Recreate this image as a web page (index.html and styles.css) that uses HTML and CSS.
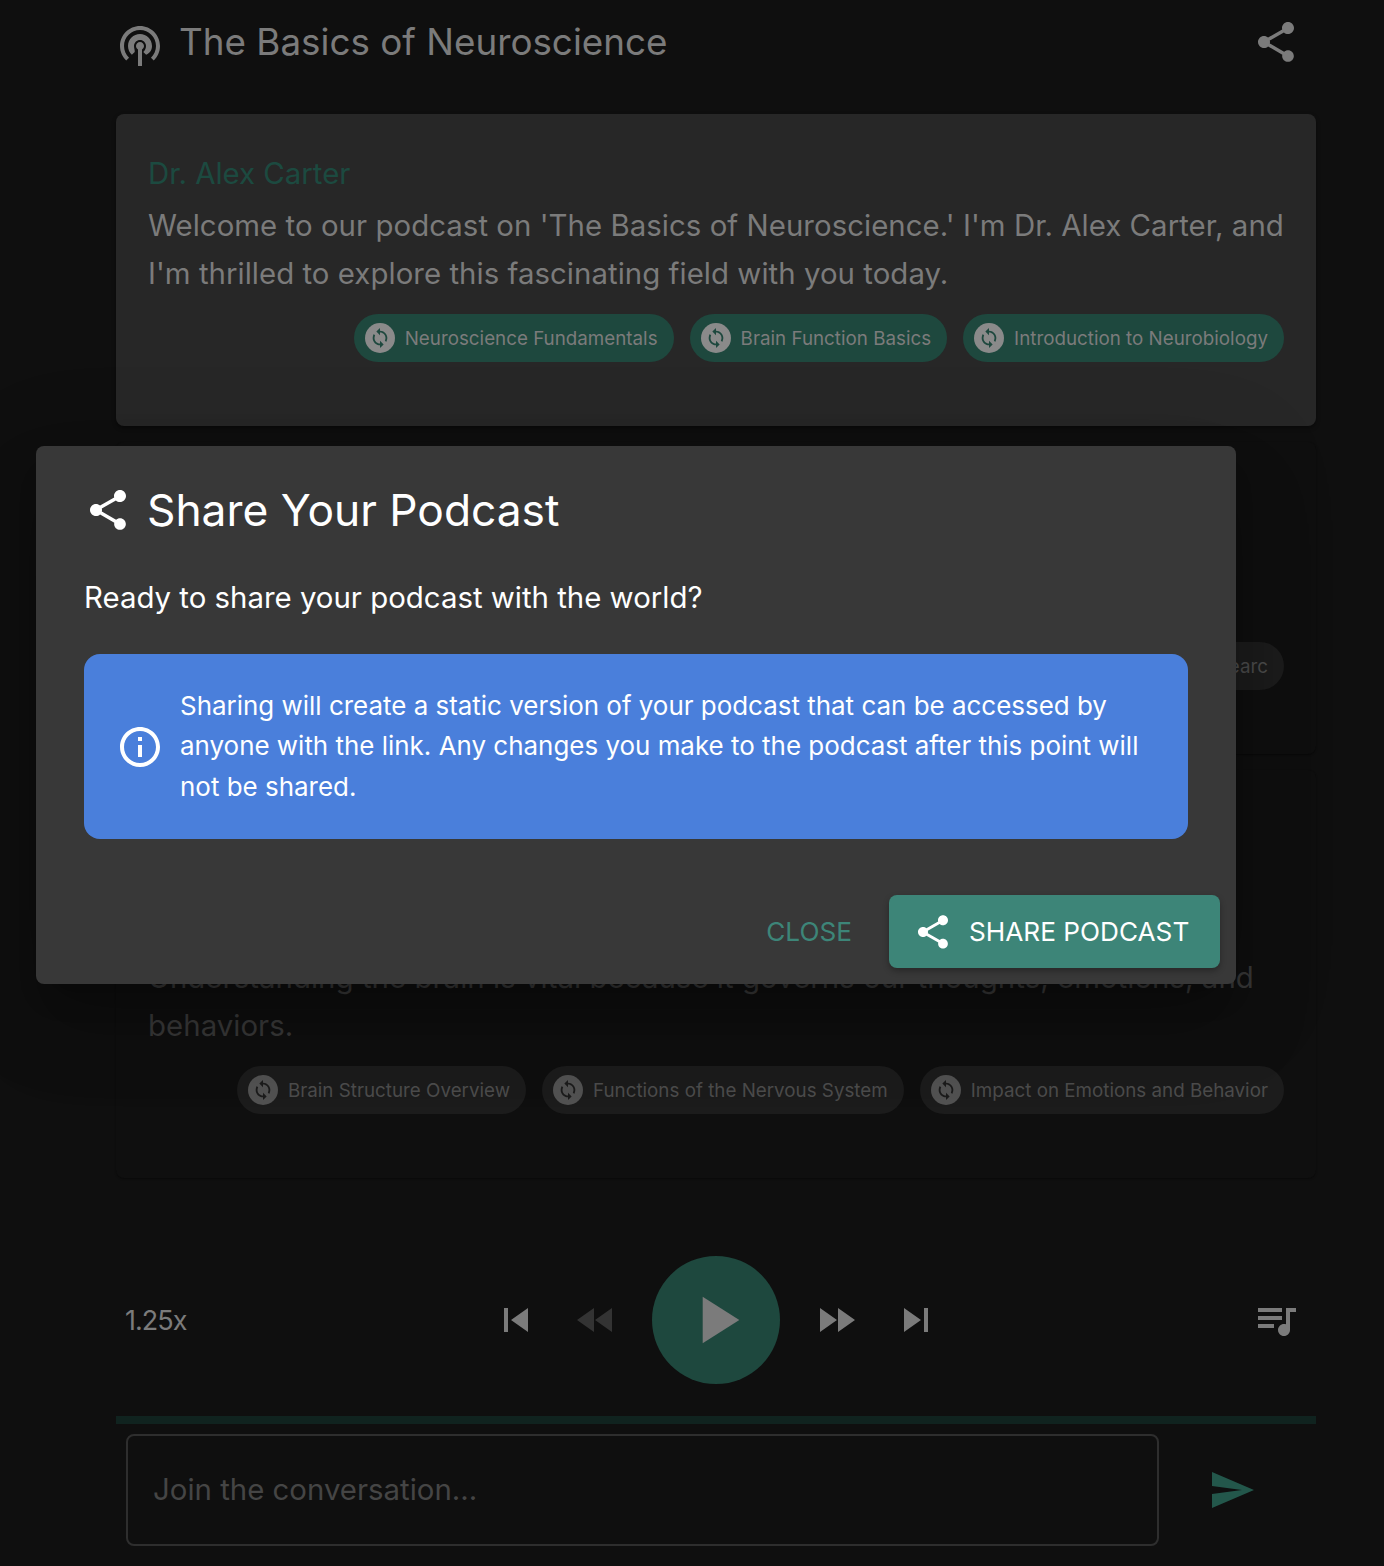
FILE: index.html
```html
<!DOCTYPE html>
<html lang="en">
<head>
    <meta charset="UTF-8">
    <meta name="viewport" content="width=device-width, initial-scale=1.0">
    <title>The Basics of Neuroscience</title>
    <link rel="stylesheet" href="styles.css">
</head>
<body>
    <svg class="sprites" aria-hidden="true">
        <symbol id="i-share" viewBox="0 0 24 24"><path d="M18 16.08c-.76 0-1.44.3-1.96.77L8.91 12.7c.05-.23.09-.46.09-.7s-.04-.47-.09-.7l7.05-4.11c.54.5 1.25.81 2.04.81 1.66 0 3-1.34 3-3s-1.34-3-3-3-3 1.34-3 3c0 .24.04.47.09.7L8.04 9.81C7.5 9.31 6.79 9 6 9c-1.66 0-3 1.34-3 3s1.34 3 3 3c.79 0 1.5-.31 2.04-.81l7.12 4.16c-.05.21-.08.43-.08.65 0 1.61 1.31 2.92 2.92 2.92 1.61 0 2.92-1.31 2.92-2.92s-1.31-2.92-2.92-2.92z"/></symbol>
        <symbol id="i-sync" viewBox="0 0 24 24"><path d="M12 4V1L8 5l4 4V6c3.31 0 6 2.69 6 6 0 1.01-.25 1.97-.7 2.8l1.46 1.46C19.54 15.03 20 13.57 20 12c0-4.42-3.58-8-8-8zm0 14c-3.31 0-6-2.69-6-6 0-1.01.25-1.97.7-2.8L5.24 7.74C4.46 8.97 4 10.43 4 12c0 4.42 3.58 8 8 8v3l4-4-4-4v3z"/></symbol>
    </svg>

    <div class="app">
        <header class="topbar">
            <div class="topbar-title">
                <svg class="icon podcast" viewBox="0 0 24 24"><path d="M14 12c0 .74-.4 1.38-1 1.72V22h-2v-8.28c-.6-.35-1-.98-1-1.72 0-1.1.9-2 2-2s2 .9 2 2zm-2-6c-3.31 0-6 2.69-6 6 0 1.74.75 3.31 1.94 4.4l1.42-1.42C9.53 14.25 9 13.19 9 12c0-1.65 1.35-3 3-3s3 1.35 3 3c0 1.19-.53 2.25-1.36 2.98l1.42 1.42C17.25 15.31 18 13.74 18 12c0-3.31-2.69-6-6-6zm0-4C6.48 2 2 6.48 2 12c0 2.85 1.2 5.41 3.11 7.24l1.42-1.42C4.98 16.36 4 14.29 4 12c0-4.41 3.59-8 8-8s8 3.59 8 8c0 2.29-.98 4.36-2.53 5.82l1.42 1.42C20.8 17.41 22 14.85 22 12c0-5.52-4.48-10-10-10z"/></svg>
                <h1>The Basics of Neuroscience</h1>
            </div>
            <svg class="icon"><use href="#i-share"/></svg>
        </header>

        <section class="card card-active">
            <h2 class="speaker">Dr. Alex Carter</h2>
            <p class="line">Welcome to our podcast on 'The Basics of Neuroscience.' I'm Dr. Alex Carter, and I'm thrilled to explore this fascinating field with you today.</p>
            <div class="chips">
                <span class="chip"><span class="chip-icon"><svg><use href="#i-sync"/></svg></span>Neuroscience Fundamentals</span>
                <span class="chip"><span class="chip-icon"><svg><use href="#i-sync"/></svg></span>Brain Function Basics</span>
                <span class="chip"><span class="chip-icon"><svg><use href="#i-sync"/></svg></span>Introduction to Neurobiology</span>
            </div>
        </section>

        <section class="card card-dim">
            <h2 class="speaker">Dr. Alex Carter</h2>
            <p class="line">Neuroscience is the study of the nervous system, and it draws on biology, chemistry and psychology to explain how we work.</p>
            <div class="chips">
                <span class="chip"><span class="chip-icon"><svg><use href="#i-sync"/></svg></span>Neuroscience Researc</span>
            </div>
        </section>

        <section class="card card-dim">
            <h2 class="speaker">Dr. Alex Carter</h2>
            <p class="line">That's right, and it is a wide field with plenty to cover, from single neurons to whole networks in the brain and the body as well.<br>Understanding the brain is vital because it governs our thoughts, emotions, and behaviors.</p>
            <div class="chips">
                <span class="chip"><span class="chip-icon"><svg><use href="#i-sync"/></svg></span>Brain Structure Overview</span>
                <span class="chip"><span class="chip-icon"><svg><use href="#i-sync"/></svg></span>Functions of the Nervous System</span>
                <span class="chip"><span class="chip-icon"><svg><use href="#i-sync"/></svg></span>Impact on Emotions and Behavior</span>
            </div>
        </section>

        <div class="player">
            <span class="speed">1.25x</span>
            <div class="controls">
                <svg class="icon" viewBox="0 0 24 24"><path d="M6 6h2v12H6zm3.5 6 8.5 6V6z"/></svg>
                <svg class="icon icon-off" viewBox="0 0 24 24"><path d="M11 18V6l-8.5 6 8.5 6zm.5-6 8.5 6V6l-8.5 6z"/></svg>
                <span class="play"><svg viewBox="0 0 24 24"><path d="M8 5v14l11-7z"/></svg></span>
                <svg class="icon" viewBox="0 0 24 24"><path d="M4 18l8.5-6L4 6v12zm9-12v12l8.5-6L13 6z"/></svg>
                <svg class="icon" viewBox="0 0 24 24"><path d="M6 18l8.5-6L6 6v12zM16 6v12h2V6h-2z"/></svg>
            </div>
            <svg class="icon queue" viewBox="0 0 24 24"><path d="M15 6H3v2h12V6zm0 4H3v2h12v-2zM3 16h8v-2H3v2zM17 6v8.18c-.31-.11-.65-.18-1-.18-1.66 0-3 1.34-3 3s1.34 3 3 3 3-1.34 3-3V8h3V6h-5z"/></svg>
        </div>

        <div class="progress"></div>

        <form class="composer">
            <input class="composer-input" type="text" placeholder="Join the conversation...">
            <svg class="icon send" viewBox="0 0 24 24"><path d="M2.01 21 23 12 2.01 3 2 10l15 2-15 2z"/></svg>
        </form>
    </div>

    <div class="dialog">
        <div class="dialog-title">
            <svg class="icon"><use href="#i-share"/></svg>
            <h2>Share Your Podcast</h2>
        </div>
        <p class="dialog-text">Ready to share your podcast with the world?</p>
        <div class="notice">
            <svg class="icon" viewBox="0 0 24 24"><path d="M11 7h2v2h-2zm0 4h2v6h-2zm1-9C6.48 2 2 6.48 2 12s4.48 10 10 10 10-4.48 10-10S17.52 2 12 2zm0 18c-4.41 0-8-3.59-8-8s3.59-8 8-8 8 3.59 8 8-3.59 8-8 8z"/></svg>
            <p>Sharing will create a static version of your podcast that can be accessed by anyone with the link. Any changes you make to the podcast after this point will not be shared.</p>
        </div>
        <div class="dialog-actions">
            <button class="btn-close" type="button">Close</button>
            <button class="btn-share" type="button"><svg><use href="#i-share"/></svg>Share Podcast</button>
        </div>
    </div>
</body>
</html>
```

FILE: styles.css
```css
* {
    box-sizing: border-box;
}
html, body {
    height: 100%;
}
body {
    font-family: Inter, "Liberation Sans", sans-serif;
    margin: 0;
    overflow: hidden;
    background-color: #0f0f0f;
    color: #7b7b7b;
}
h1, h2, p {
    margin: 0;
    font-weight: 400;
}
svg {
    fill: currentColor;
    display: block;
}
.sprites {
    display: none;
}
.icon {
    width: 48px;
    height: 48px;
    flex-shrink: 0;
}
.app {
    width: 1200px;
    margin-left: 116px;
}

/* top bar */
.topbar {
    height: 84px;
    margin-bottom: 30px;
    display: flex;
    align-items: center;
    justify-content: space-between;
    padding-right: 16px;
}
.topbar-title {
    display: flex;
    align-items: center;
    gap: 15px;
}
.topbar h1 {
    font-size: 36.8px;
    line-height: 48px;
}
.podcast {
    margin-top: 8px;
}

/* transcript cards */
.card {
    padding: 32px 32px 64px;
    margin-bottom: 16px;
    border-radius: 8px;
}
.speaker {
    font-size: 29.4px;
    line-height: 55px;
}
.line {
    margin-top: 1px;
    font-size: 29.4px;
    line-height: 48px;
    letter-spacing: 0.04px;
}
.chips {
    display: flex;
    justify-content: flex-end;
    gap: 16px;
    margin-top: 16px;
}
.chip {
    display: flex;
    align-items: center;
    gap: 10px;
    height: 48px;
    padding: 0 16px 0 11px;
    border-radius: 24px;
    font-size: 18.8px;
    white-space: nowrap;
}
.chip-icon {
    width: 30px;
    height: 30px;
    border-radius: 50%;
    display: flex;
    align-items: center;
    justify-content: center;
}
.chip-icon svg {
    width: 22px;
    height: 22px;
}
.card-active {
    background-color: #272727;
    box-shadow: 0 2px 4px rgba(0, 0, 0, 0.4);
}
.card-active .speaker {
    color: #1c4a40;
}
.card-active .chip {
    background-color: #1e483e;
    color: #7b7b7b;
}
.card-active .chip-icon {
    background-color: #8a8a8a;
    color: #1e483e;
}
.card-dim {
    background-color: #0f0f0f;
    color: #383838;
    box-shadow: 0 1px 2px rgba(0, 0, 0, 0.4);
}
.card-dim .chip {
    background-color: #1c1c1c;
    color: #4c4c4c;
}
.card-dim .chip-icon {
    background-color: #525252;
    color: #1c1c1c;
}

/* player */
.player {
    margin-top: 78px;
    height: 128px;
    display: grid;
    grid-template-columns: 1fr auto 1fr;
    align-items: center;
}
.speed {
    padding-left: 9px;
    font-size: 27px;
    letter-spacing: -1px;
}
.controls {
    display: flex;
    align-items: center;
    gap: 32px;
}
.icon-off {
    color: #333;
}
.play {
    width: 128px;
    height: 128px;
    border-radius: 50%;
    background-color: #1e483e;
    display: flex;
    align-items: center;
    justify-content: center;
}
.play svg {
    width: 80px;
    height: 80px;
}
.queue {
    justify-self: end;
    margin-right: 16px;
}
.progress {
    height: 8px;
    margin-top: 32px;
    background-color: #10231f;
}

/* composer */
.composer {
    margin-top: 10px;
    padding-left: 10px;
    display: flex;
    align-items: center;
    gap: 49px;
}
.composer-input {
    width: 1033px;
    height: 112px;
    padding: 0 25px 2px;
    background: transparent;
    border: 2px solid #2e2e2e;
    border-radius: 8px;
    font-family: inherit;
    font-size: 29.4px;
}
.composer-input::placeholder {
    color: #454545;
    opacity: 1;
}
.send {
    color: #23574b;
}

/* share dialog */
.dialog {
    position: absolute;
    left: 36px;
    top: 446px;
    width: 1200px;
    height: 538px;
    padding: 40px 16px 16px 48px;
    display: flex;
    flex-direction: column;
    background-color: #383838;
    border-radius: 8px;
    color: white;
    box-shadow: 0 22px 30px -14px rgba(0, 0, 0, 0.2), 0 48px 76px 6px rgba(0, 0, 0, 0.14), 0 18px 92px 16px rgba(0, 0, 0, 0.12);
}
.dialog-title {
    display: flex;
    align-items: center;
    gap: 15px;
}
.dialog-title h2 {
    font-size: 44.3px;
    line-height: 48px;
}
.dialog-text {
    margin-top: 40px;
    font-size: 29.4px;
    line-height: 48px;
}
.notice {
    margin: 32px 32px 0 0;
    padding: 32px 44px 32px 32px;
    display: flex;
    align-items: center;
    gap: 16px;
    background-color: #4a7fdb;
    border-radius: 16px;
}
.notice p {
    font-size: 25.95px;
    line-height: 40.4px;
}
.dialog-actions {
    margin-top: auto;
    display: flex;
    align-items: center;
    justify-content: flex-end;
    gap: 37px;
}
.btn-close, .btn-share {
    font-family: inherit;
    font-size: 26.2px;
    text-transform: uppercase;
    border: none;
    cursor: pointer;
}
.btn-close {
    background: none;
    padding: 0;
    color: #3d8578;
}
.btn-share {
    width: 331px;
    height: 73px;
    padding-left: 24px;
    display: flex;
    align-items: center;
    gap: 16px;
    background-color: #3d8578;
    color: white;
    border-radius: 8px;
    box-shadow: 0 3px 6px rgba(0, 0, 0, 0.3);
}
.btn-share svg {
    width: 40px;
    height: 40px;
}
```
